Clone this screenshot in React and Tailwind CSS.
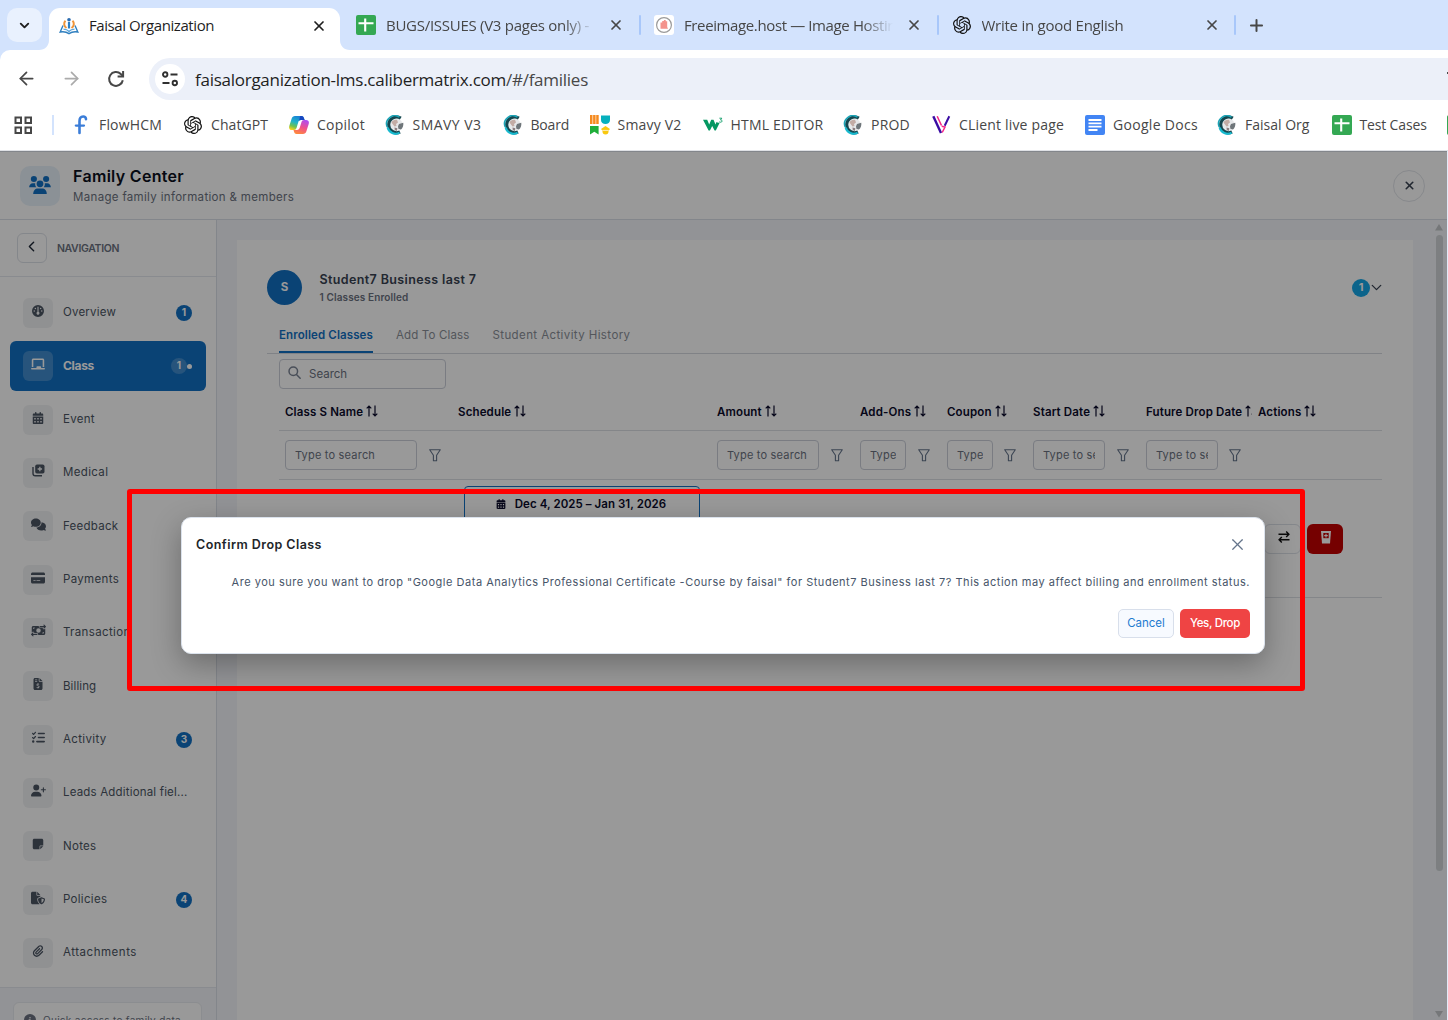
import {
  FaGauge,
  FaChalkboard,
  FaCalendarDays,
  FaComments,
  FaCreditCard,
  FaMoneyBillTransfer,
  FaFileInvoiceDollar,
  FaListCheck,
  FaUserPlus,
  FaNoteSticky,
  FaFileShield,
  FaPaperclip,
  FaCircleInfo,
} from "react-icons/fa6";
import { SiOpenai } from "react-icons/si";
import { ArrowLeft, ArrowRight, ChevronDown, ChevronLeft, Plus, X } from "lucide-react";

function SheetIcon() {
  return (
    <svg width="20" height="20" viewBox="0 0 20 20">
      <rect width="20" height="20" rx="2" fill="#34a853" />
      <path d="M2.5 8.2h15M9.2 3.5v13" stroke="#fff" strokeWidth="2.1" />
    </svg>
  );
}

function DocsIcon() {
  return (
    <svg width="20" height="20" viewBox="0 0 20 20">
      <rect width="20" height="20" rx="2" fill="#4285f4" />
      <path d="M3.5 5h13M3.5 8.3h13M3.5 11.7h13M3.5 15h9" stroke="#fff" strokeWidth="1.8" />
    </svg>
  );
}

function FlowIcon() {
  return (
    <svg width="20" height="20" viewBox="0 0 20 20" fill="none" stroke="#3b7dd8" strokeLinecap="round">
      <path d="M8.500 18V6.200c0-3 1.200-4.700 3.600-4.700 2 0 2.800 1 2.900 2.600" strokeWidth="2.600" />
      <path d="M4.800 10.600h8.200" strokeWidth="2.200" />
    </svg>
  );
}

function CopilotIcon() {
  return (
    <svg width="20" height="20" viewBox="0 0 20 20">
      <defs>
        <linearGradient id="cpA" x1="0.6" y1="0" x2="0.2" y2="1">
          <stop offset="0" stopColor="#1b7fd6" />
          <stop offset="0.45" stopColor="#1fb4c9" />
          <stop offset="0.75" stopColor="#6fc24e" />
          <stop offset="1" stopColor="#ffd21a" />
        </linearGradient>
        <linearGradient id="cpB" x1="0.7" y1="0" x2="0.3" y2="1">
          <stop offset="0" stopColor="#b04cf0" />
          <stop offset="0.5" stopColor="#f0508c" />
          <stop offset="1" stopColor="#ff8a3c" />
        </linearGradient>
      </defs>
      <path d="M6 1h6.5c1.3 0 2 .7 2.400 2L15.600 5H12c-1.500 0-2.300.8-2.800 2.400L7.500 13c-.4 1.300-1 2-2.500 2H3c-2.400 0-3.400-1.600-2.700-4L2.600 3.800C3.200 2 4.300 1 6 1z" fill="url(#cpA)" />
      <path d="M14 19H7.500c-1.300 0-2-.7-2.400-2l-.6-2H8c1.500 0 2.300-.8 2.800-2.400L12.500 7c.4-1.300 1-2 2.500-2h2c2.400 0 3.400 1.600 2.700 4l-2.300 7.200c-.6 1.800-1.700 2.800-3.400 2.800z" fill="url(#cpB)" />
      <path d="M12.500 1c1.300 0 2 .7 2.400 2l.7 2H12c-.9 0-1.600.3-2 .9L11.200 1z" fill="#1747c0" />
    </svg>
  );
}

// teal "C" with a small globe inside
function CaliberIcon() {
  return (
    <svg width="20" height="20" viewBox="0 0 20 20">
      <circle cx="11.300" cy="10" r="6.500" fill="#e6e8ea" />
      <path d="M15.800 3.200A7.900 7.900 0 1 0 15 17" fill="none" stroke="#15474f" strokeWidth="3.200" />
      <path d="M14.500 2.200A8.200 8.200 0 0 0 2.200 12" fill="none" stroke="#1ba3b5" strokeWidth="1.600" />
      <path d="M2.600 12.500a8.400 8.400 0 0 0 12 5.300" fill="none" stroke="#18b9ce" strokeWidth="2.200" />
      <path d="M6.500 7.500c1-2.400 3.500-3.200 5.500-2.700L13 7.500l-2 1.500.5 2-2 .5L8 9.500z" fill="#c3aca5" />
      <path d="M14 9l4.300-1.300c.3 2.500-.5 5.300-2.300 6.800l-2.600-.7-.4-2.500z" fill="#6f767a" />
      <path d="M9.500 12.500l2.800.8-.5 2.600-2-.8z" fill="#8b7d7e" />
    </svg>
  );
}

function SmavyIcon() {
  return (
    <svg width="20" height="20" viewBox="0 0 20 20">
      <path d="M0 0h2.500v9H0zM3.100 0h2.500v9H3.100zM6.200 0h2.500v9H6.200z" fill="#f58a1f" />
      <path d="M11 .5h9V5c0 2.500-2 4-4.500 4S11 7.500 11 5z" fill="#06b0bd" />
      <path d="M0 11h8.600v8.500l-4.300-2.800L0 19.500z" fill="#1fae3a" />
      <path d="M15.500 11l4.500 3-1.300 1.500h-6.400L11 14z" fill="#f9c80e" />
      <circle cx="15.500" cy="16.500" r="3" fill="#f9c80e" />
      <path d="M12.500 15.400h6" stroke="#fff" strokeWidth=".7" />
    </svg>
  );
}

function W3Icon() {
  return (
    <svg width="20" height="20" viewBox="0 0 20 20" fill="none">
      <path d="M0 4.800h4.200l2 4.600 2-4.600h2.300l2 4.600 1-2.400c1 .8 2 1 3.300.6l-4 7.900h-1.200L9.200 11l-2.300 4.500H5.600z" fill="#059862" />
      <path d="M16.400 3.200h2.400l-1.300 1.700c1.200 0 1.600.6 1.500 1.400-.2 1-1.700 1.200-2.700.5" stroke="#059862" strokeWidth=".9" />
    </svg>
  );
}

function VIcon() {
  return (
    <svg width="20" height="20" viewBox="0 0 20 20" fill="none">
      <path d="M2.300 1.200l7.700 16.800" stroke="#3a0ca3" strokeWidth="2.400" />
      <path d="M18.300 1.200l-4.600 9.500" stroke="#3a0ca3" strokeWidth="2" />
      <path d="M6.200 1.200l4.300 9.300M11.200 17.500l2.800-5.500-3.300-.8" stroke="#f72585" strokeWidth="1.500" />
    </svg>
  );
}

function FaisalIcon() {
  return (
    <svg width="20" height="20" viewBox="0 0 20 20" fill="none">
      <circle cx="10" cy="3.800" r="1.800" fill="#2b6cb0" />
      <path d="M10 6v6.500" stroke="#2b7fc4" strokeWidth="2.200" />
      <path d="M6.500 4.800c-2 1.800-1.800 5.200 1 7.200M13.500 4.800c2 1.800 1.800 5.200-1 7.200" stroke="#f0953a" strokeWidth="2" />
      <path d="M4 9.500L1.200 16c3-.6 6-.3 8.800 1.600 2.800-1.900 5.800-2.200 8.800-1.600L16 9.500" stroke="#2f7fbf" strokeWidth="1.400" />
      <path d="M4.500 13.200c2.300 0 4.200.8 5.500 2.300 1.300-1.500 3.200-2.300 5.500-2.300" stroke="#5aa5dc" strokeWidth="1.300" />
    </svg>
  );
}

function FreeimageIcon() {
  return (
    <svg width="20" height="20" viewBox="0 0 20 20">
      <rect width="20" height="20" rx="3" fill="#fff" />
      <circle cx="10" cy="10" r="7.400" fill="none" stroke="#9a9a9a" strokeWidth="1.200" />
      <path d="M6.500 7.500h1.700V6h1.700V5h1.800v1.300h1.500V12l.8 1.800H6.500z" fill="#f3938c" />
    </svg>
  );
}

function FamilyIcon() {
  return (
    <svg width="22" height="18" viewBox="0 0 64 53" fill="#1271c4">
      <circle cx="14" cy="9" r="9" />
      <circle cx="50" cy="9" r="9" />
      <circle cx="32" cy="23" r="10" />
      <path d="M0 33c0-7 5-12 11-12h7c-1 5 1 9 3 12zM64 33c0-7-5-12-11-12h-7c1 5-1 9-3 12z" />
      <path d="M12 53c0-10 6-16 14-16h12c8 0 14 6 14 16z" />
    </svg>
  );
}

function MedicalIcon() {
  return (
    <svg width="13" height="13" viewBox="0 0 13 13" fill="none">
      <rect x="3.200" y="0.500" width="9.300" height="9" rx="1.800" fill="currentColor" />
      <path d="M7.850 2.800v4.400M5.650 5h4.400" stroke="#f1f2f4" strokeWidth="1.300" />
      <path d="M1 3v6.500c0 1.500.8 2.300 2.300 2.300H10" stroke="currentColor" strokeWidth="1.400" />
    </svg>
  );
}

function SearchIcon() {
  return (
    <svg width="13" height="13" viewBox="0 0 14 14" fill="none" stroke="#7b8494" strokeWidth="1.600">
      <circle cx="5.700" cy="5.700" r="4.600" />
      <path d="M9.100 9.100l4 4" strokeLinecap="round" />
    </svg>
  );
}

function SortIcon() {
  return (
    <svg className="shrink-0 mb-1" width="12" height="12" viewBox="0 0 12 12" fill="none" stroke="currentColor" strokeWidth="1.200">
      <path d="M3 11.500V1M.7 3.300L3 1l2.300 2.300M9 .5V11M6.700 8.700L9 11l2.300-2.300" />
    </svg>
  );
}

function FilterIcon() {
  return (
    <svg className="shrink-0" width="12" height="13" viewBox="0 0 12 13" fill="none" stroke="#64748b" strokeWidth="1.100" strokeLinejoin="round">
      <path d="M.7.800h10.600L7.600 6.200v5.600H4.400V6.200z" />
    </svg>
  );
}

const TABS = [
  { title: "BUGS/ISSUES (V3 pages only) -", icon: <SheetIcon />, spacing: "tracking-[-0.27px]" },
  { title: "Freeimage.host — Image Hostin", icon: <FreeimageIcon />, spacing: "tracking-[-0.38px]" },
  { title: "Write in good English", icon: <SiOpenai size={18} color="#111" />, spacing: "tracking-[-0.25px]" },
];

const BOOKMARKS = [
  { name: "FlowHCM", icon: <FlowIcon />, box: "w-[112px] tracking-[0.18px]" },
  { name: "ChatGPT", icon: <SiOpenai size={18} color="#111" />, box: "w-[106px] tracking-[0.07px]" },
  { name: "Copilot", icon: <CopilotIcon />, box: "w-[95.5px] tracking-[0.24px]" },
  { name: "SMAVY V3", icon: <CaliberIcon />, box: "w-[118px] tracking-[0.46px]" },
  { name: "Board", icon: <CaliberIcon />, box: "w-[87px] tracking-[-0.2px]" },
  { name: "Smavy V2", icon: <SmavyIcon />, box: "w-[113px] tracking-[0.2px]" },
  { name: "HTML EDITOR", icon: <W3Icon />, box: "w-[140.5px] tracking-[0.21px]" },
  { name: "PROD", icon: <CaliberIcon />, box: "w-[88px] tracking-[0.22px]" },
  { name: "CLient live page", icon: <VIcon />, box: "w-[154px] tracking-[0.18px]" },
  { name: "Google Docs", icon: <DocsIcon />, box: "w-[132px] tracking-[0.31px]" },
  { name: "Faisal Org", icon: <CaliberIcon />, box: "w-[114.5px]" },
  { name: "Test Cases", icon: <SheetIcon />, box: "w-[115.5px] tracking-[-0.15px]" },
  { name: "", icon: <SheetIcon />, box: "w-5" },
];

const NAV = [
  { label: "Overview", icon: <FaGauge size={12} />, count: 1, spacing: "tracking-[0.2px]" },
  { label: "Class", icon: <FaChalkboard size={14} />, count: 1, active: true },
  { label: "Event", icon: <FaCalendarDays size={12} />, spacing: "tracking-[0.3px]" },
  { label: "Medical", icon: <MedicalIcon />, spacing: "tracking-[0.35px]" },
  { label: "Feedback", icon: <FaComments size={15} />, spacing: "tracking-[0.25px]" },
  { label: "Payments", icon: <FaCreditCard size={14} />, spacing: "tracking-[0.33px]" },
  { label: "Transaction", icon: <FaMoneyBillTransfer size={15} />, spacing: "tracking-[0.35px]" },
  { label: "Billing", icon: <FaFileInvoiceDollar size={12} />, spacing: "tracking-[0.1px]" },
  { label: "Activity", icon: <FaListCheck size={13} />, count: 3, spacing: "tracking-[0.35px]" },
  { label: "Leads Additional fiel...", icon: <FaUserPlus size={15} />, spacing: "tracking-[0.18px]" },
  { label: "Notes", icon: <FaNoteSticky size={12} />, spacing: "tracking-[0.3px]" },
  { label: "Policies", icon: <FaFileShield size={14} />, count: 4, spacing: "tracking-[0.3px]" },
  { label: "Attachments", icon: <FaPaperclip size={12} />, spacing: "tracking-[0.53px]" },
];

const COLUMNS = [
  { name: "Class S Name", input: "w-[132px]", gap: "gap-3" },
  { name: "Schedule" },
  { name: "Amount", input: "w-[102px]", gap: "gap-3" },
  { name: "Add-Ons", input: "w-[46px]", gap: "gap-3" },
  { name: "Coupon", input: "w-[46px]", gap: "gap-[11px]" },
  { name: "Start Date", input: "w-[72px]", gap: "gap-3" },
  { name: "Future Drop Date", input: "w-[72px]", gap: "gap-[11px]" },
  { name: "Actions" },
];

const GRID = "grid grid-cols-[173px_259px_143px_87px_86px_113px_112px_130px]";

function BrowserTabs() {
  return (
    <div className="h-[50px] bg-[#d3e3fd] flex items-center">
      <div className="ml-[7px] w-[35px] h-[34px] rounded-[10px] bg-[#e9f1fe] flex items-center justify-center">
        <ChevronDown size={15} strokeWidth={3} color="#1f1f1f" />
      </div>
      <svg className="self-end ml-[-3px]" width="10" height="10">
        <path d="M10 0v10H0C6 10 10 6 10 0z" fill="#fff" />
      </svg>
      <div className="self-end h-[42px] w-[291px] bg-white rounded-t-[11px] flex items-center pl-[10px] pb-[7px]">
        <FaisalIcon />
        <span className="ml-[10px] flex-1 text-[15px] tracking-[-0.42px] text-[#1f1f1f]">Faisal Organization</span>
        <X className="mr-[13px]" size={16} strokeWidth={2.600} color="#1f1f1f" />
      </div>
      <svg className="self-end" width="10" height="10">
        <path d="M0 0v10h10C4 10 0 6 0 0z" fill="#fff" />
      </svg>
      {TABS.map((tab, i) => (
        <div
          key={tab.title}
          className={`h-full flex items-center ${i === 0 ? "w-[291px] pl-[6px]" : "w-[297.500px] pl-[13px]"}`}
        >
          <span className="w-5 flex justify-center shrink-0">{tab.icon}</span>
          <span
            className={`ml-[10px] w-[209px] shrink-0 whitespace-nowrap text-[15px] text-[#474747] mask-r-from-85% ${tab.spacing}`}
          >
            {tab.title}
          </span>
          <X className="ml-[13px] shrink-0" size={16} strokeWidth={2.600} color="#474747" />
          <span className="ml-auto w-[2px] h-5 bg-[#a8c7fa] rounded-full" />
        </div>
      ))}
      <Plus className="ml-[11px]" size={19} strokeWidth={2.500} color="#474747" />
    </div>
  );
}

function Toolbar() {
  return (
    <div className="bg-[#d3e3fd]">
      <div className="h-[58px] bg-white rounded-tl-[10px] flex items-center">
        <ArrowLeft className="ml-4 mb-px" size={21} strokeWidth={2} color="#474747" />
        <ArrowRight className="ml-6 mb-px" size={21} strokeWidth={2} color="#ababab" />
        <svg className="ml-[25px] mb-px" width="18" height="18" viewBox="0 0 18 18" fill="none" stroke="#474747" strokeWidth="2">
          <path d="M15.800 10.200a6.900 6.900 0 1 1-2-6.200l2.200 2" />
          <path d="M16.100 1v5.500h-5.500" />
        </svg>
        <div className="ml-6 h-[42px] flex-1 rounded-l-full bg-[#ecf0f9] flex items-center pl-[6px]">
          <span className="w-[30px] h-[30px] rounded-full bg-white flex items-center justify-center">
            <svg width="16" height="16" viewBox="0 0 16 16" fill="none" stroke="#303030" strokeWidth="1.900">
              <circle cx="3.200" cy="3.500" r="2.200" />
              <path d="M8.500 3.500h7M.5 12h7" />
              <circle cx="12.800" cy="12" r="2.200" />
            </svg>
          </span>
          <span className="ml-[10px] pt-px text-[17px] tracking-[-0.26px] text-[#1f1f1f]">
            faisalorganization-lms.calibermatrix.com<span className="text-[#474747]">/#/families</span>
          </span>
          <span className="ml-auto w-px h-[2px] mb-3 bg-[#474747]" />
        </div>
      </div>
    </div>
  );
}

function Bookmarks() {
  return (
    <div className="h-[43px] bg-white border-b border-[#dfe1e5] flex items-center pb-[8px] overflow-hidden">
      <svg className="ml-[14px] shrink-0" width="19" height="19" viewBox="0 0 19 19" fill="none" stroke="#474747" strokeWidth="2">
        <rect x="1.500" y="1.500" width="5.500" height="5.500" />
        <rect x="11.500" y="1.500" width="5.500" height="5.500" />
        <rect x="1.500" y="11.500" width="5.500" height="5.500" />
        <rect x="11.500" y="11.500" width="5.500" height="5.500" />
      </svg>
      <span className="ml-[19px] mr-[17px] w-[2px] h-5 bg-[#d3e3fd] shrink-0" />
      {BOOKMARKS.map((b, i) => (
        <div key={i} className={`flex items-center gap-2 shrink-0 whitespace-nowrap text-sm text-[#474747] ${b.box}`}>
          <span className="w-5 flex justify-center shrink-0">{b.icon}</span>
          {b.name}
        </div>
      ))}
    </div>
  );
}

function NavItem({ item }) {
  return (
    <li
      className={`h-[50px] mb-[3.330px] rounded-md flex items-center pl-[13px] pr-[14px] ${
        item.active ? "bg-[#1271c4] text-white" : "text-[#4b5563]"
      }`}
    >
      <span
        className={`w-[30px] h-[30px] rounded-md flex items-center justify-center pb-1 ${
          item.active ? "bg-white/20" : "bg-[#f1f2f4]"
        }`}
      >
        {item.icon}
      </span>
      <span
        className={`ml-[10px] flex-1 whitespace-nowrap ${
          item.active ? "text-xs font-bold tracking-[-0.3px]" : `text-[11.500px] ${item.spacing}`
        }`}
      >
        {item.label}
      </span>
      {item.count && (
        <span
          className={`w-4 h-4 rounded-full flex items-center justify-center pb-px text-[10px] font-bold text-white ${
            item.active ? "bg-white/20" : "bg-[#1271c4]"
          }`}
        >
          {item.count}
        </span>
      )}
      {item.active && <span className="w-[5px] h-[5px] rounded-full bg-white" />}
    </li>
  );
}

function Sidebar() {
  return (
    <aside className="w-[217px] shrink-0 bg-white border-r border-[#dbe0e8] flex flex-col">
      <div className="h-[57px] shrink-0 border-b border-[#e5e8ee] flex items-center pl-[17px]">
        <button className="w-[30px] h-[30px] rounded-md border border-[#dde1e8] flex items-center justify-center pb-[3px] pr-[2px]">
          <ChevronLeft size={17} strokeWidth={2} color="#1f2937" />
        </button>
        <span className="ml-[10px] pt-px text-[10.500px] font-semibold tracking-[-0.350px] text-[#6b7280]">NAVIGATION</span>
      </div>
      <ul className="px-[10px] pt-[11px] h-[710px] shrink-0">
        {NAV.map((item) => (
          <NavItem key={item.label} item={item} />
        ))}
      </ul>
      <div className="flex-1 bg-[#f4f6fa] border-t border-[#e5e8ee] pt-[14px] pl-[13px] pr-[14px] overflow-hidden">
        <div className="h-9 bg-white border border-[#e8ebf0] rounded-md flex items-center pl-[10px] text-[10px] tracking-[0.290px] text-[#6b7280]">
          <FaCircleInfo size={12} />
          <span className="ml-[7px] whitespace-nowrap">Quick access to family data</span>
        </div>
      </div>
    </aside>
  );
}

function ClassTable() {
  return (
    <div className="ml-3 text-black">
      <div className={`${GRID} h-[37px] border-b border-[#dcdfe4]`}>
        {COLUMNS.map((c) => (
          <div
            key={c.name}
            className="flex items-center gap-[3px] pl-[6px] pt-[2px] overflow-hidden whitespace-nowrap text-[11.500px] tracking-[0.150px] font-semibold text-[#0b0b2b]"
          >
            {c.name}
            <SortIcon />
          </div>
        ))}
      </div>
      <div className={`${GRID} h-[49px] border-b border-[#dcdfe4]`}>
        {COLUMNS.map((c) => (
          <div key={c.name} className={`flex items-center pl-[6px] ${c.gap || ""}`}>
            {c.input && (
              <>
                <div className={`h-[30px] shrink-0 border border-[#cbcfd9] rounded px-[9px] flex items-center ${c.input}`}>
                  <span className="w-full overflow-hidden whitespace-nowrap text-[11px] tracking-[0.200px] text-[#6b7280]">
                    {c.input === "w-[46px]" ? "Type" : "Type to search"}
                  </span>
                </div>
                <FilterIcon />
              </>
            )}
          </div>
        ))}
      </div>
      <div className={`${GRID} h-[118px] border-b border-[#dcdfe4]`}>
        <div />
        <div className="pl-3 pt-[6px]">
          <div className="w-[236px] h-[100px] border border-[#1271c4] rounded flex justify-center gap-[9px] pr-[2px] pt-[9px] text-[11.500px] leading-[17px] tracking-[0.060px] font-semibold text-[#0b0b2b]">
            <FaCalendarDays className="mt-[3px]" size={10} />
            Dec 4, 2025 – Jan 31, 2026
          </div>
        </div>
        <div className="col-span-5" />
        <div className="flex items-center">
          <button className="ml-3 w-[37px] h-[30px] shrink-0 rounded-md border border-[#dde1e8] flex items-center justify-center pb-[3px] pl-[2px]">
            <svg width="12" height="12" viewBox="0 0 12 12" fill="none" stroke="#111" strokeWidth="1.400">
              <path d="M.5 3.300h10.300M8.200.6l2.700 2.700L8.200 6M11.500 8.700H1.200M3.800 6L1.100 8.700l2.700 2.700" />
            </svg>
          </button>
          <button className="ml-[6px] w-9 h-[30px] shrink-0 rounded-md bg-[#c40000] flex items-center justify-center pb-[3px] pl-[2px]">
            <svg width="10" height="13" viewBox="0 0 10 13">
              <path d="M0 0h10L9 12.500H1z" fill="#fff" />
              <path d="M2.300 2h5.400v5.200H2.300z" fill="#c40000" />
              <path d="M5 2.800v3.600M3.200 4.600h3.600" stroke="#fff" strokeWidth="1.100" />
            </svg>
          </button>
        </div>
      </div>
    </div>
  );
}

function StudentCard() {
  return (
    <section className="w-[1176px] ml-5 mt-5 bg-white pl-[30px] pr-[31px] pt-[30px]">
      <div className="h-[35px] flex items-center">
        <span className="w-[35px] h-[35px] rounded-full bg-[#1271c4] text-white text-[11.500px] font-bold flex items-center justify-center pt-px">
          S
        </span>
        <div className="ml-[17.500px] pt-[2px] flex-1">
          <p className="text-[12.500px] leading-[18px] tracking-[0.380px] font-semibold text-[#374151]">Student7 Business last 7</p>
          <p className="text-[10px] leading-[17px] tracking-[0.120px] font-semibold text-[#6b7280]">1 Classes Enrolled</p>
        </div>
        <span className="w-[18px] h-[18px] rounded-full bg-[#14a7e8] text-white text-[11px] font-bold flex items-center justify-center">
          1
        </span>
        <ChevronDown size={17} strokeWidth={1.800} color="#374151" className="mr-[-3px] ml-[-2px]" />
      </div>
      <div className="mt-3 h-[37px] border-b border-[#d5d9e0] pl-3 flex gap-[23px] text-[11.500px]">
        <span className="h-[36px] border-b-2 border-[#1271c4] leading-[36px] font-semibold tracking-[0.120px] text-[#1271c4]">
          Enrolled Classes
        </span>
        <span className="leading-[36px] tracking-[0.150px] text-[#8a8f98]">Add To Class</span>
        <span className="leading-[36px] tracking-[0.400px] text-[#8a8f98]">Student Activity History</span>
      </div>
      <div className="ml-3 mt-[5px] mb-[5px] w-[167px] h-[30px] rounded border border-[#cbcfd9] flex items-center pl-2">
        <span className="mb-1">
          <SearchIcon />
        </span>
        <span className="ml-2 pt-px text-[11.500px] text-[#6b7280]">Search</span>
      </div>
      <ClassTable />
    </section>
  );
}

function ConfirmDialog() {
  return (
    <div className="absolute left-[181px] top-[366px] w-[1084px] h-[137px] bg-white border border-[#dbe2ec] rounded-[10px] shadow-[0_10px_30px_rgba(0,0,0,0.300)] px-[14px]">
      <div className="h-[54px] flex items-center justify-between">
        <h2 className="text-[12.500px] tracking-[0.450px] font-semibold text-[#212529]">Confirm Drop Class</h2>
        <X className="mr-[3px] mb-px" size={19} strokeWidth={1.500} color="#64748b" />
      </div>
      <p className="text-right text-[11px] leading-[20px] tracking-[0.520px] whitespace-nowrap text-[#475569]">
        Are you sure you want to drop "Google Data Analytics Professional Certificate -Course by faisal" for Student7 Business
        last 7? This action may affect billing and enrollment status.
      </p>
      <div className="mt-[17px] flex justify-end gap-[6px]">
        <button className="w-14 h-[29px] rounded-[5px] border border-[#d8dfeb] bg-[#f7faff] text-[11.500px] text-[#1f7ad0]">Cancel</button>
        <button className="w-[70px] h-[29px] rounded-[5px] bg-[#ef4444] text-[11.500px] tracking-[-0.340px] font-medium text-white">
          Yes, Drop
        </button>
      </div>
    </div>
  );
}

export default function App() {
  return (
    <div className="w-[1448px] h-[1020px] overflow-hidden bg-[#e4ebf8] font-['Open_Sans',sans-serif]">
      <BrowserTabs />
      <Toolbar />
      <Bookmarks />

      <div className="relative w-[1447px] h-[869px] overflow-hidden bg-white font-['Inter',sans-serif] flex flex-col">
        <header className="h-[69px] shrink-0 border-t border-b border-[#dbe0e8] flex items-center pl-5 pr-[22px]">
          <div className="w-10 h-10 rounded-[10px] bg-[#e8f2fb] flex items-center justify-center pb-[2px]">
            <FamilyIcon />
          </div>
          <div className="ml-[13px] flex-1">
            <h1 className="text-base leading-[22px] tracking-[0.310px] font-semibold text-[#0b1020]">Family Center</h1>
            <p className="text-[11.500px] leading-[20px] tracking-[0.330px] text-[#6b7280]">Manage family information &amp; members</p>
          </div>
          <button className="w-8 h-8 rounded-full border border-[#e2e5ea] flex items-center justify-center">
            <X size={13} strokeWidth={3} color="#374151" />
          </button>
        </header>
        <div className="flex-1 min-h-0 flex">
          <Sidebar />
          <main className="flex-1 bg-[#f3f6fa] flex">
            <StudentCard />
            <div className="ml-auto w-4 flex flex-col items-center">
              <svg className="mt-[4px] mb-1" width="8" height="7">
                <path d="M4 0l4 6.500H0z" fill="#c4c7ca" />
              </svg>
              <div className="w-[7px] h-[636px] rounded-full bg-[#d0d4d8]" />
              <svg className="mt-auto mb-[2px]" width="8" height="7">
                <path d="M0 0h8L4 6.500z" fill="#c4c7ca" />
              </svg>
            </div>
          </main>
        </div>

        <div className="absolute inset-0 bg-black/40" />
        <ConfirmDialog />
        <div className="absolute left-[127px] top-[338px] w-[1178px] h-[202px] border-[5.500px] border-[#fe0000] rounded-[3px]" />
      </div>
    </div>
  );
}
